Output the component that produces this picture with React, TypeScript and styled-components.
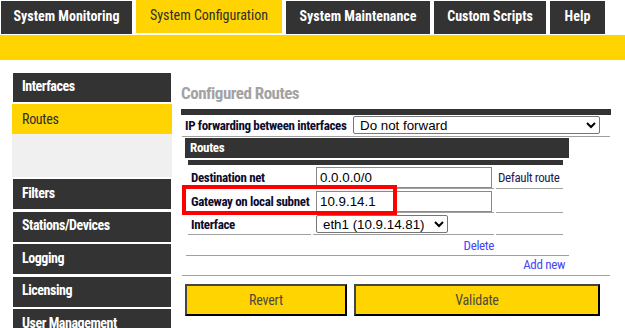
import React from 'react';
import styled, { createGlobalStyle } from 'styled-components';

const COND = '"Roboto Condensed", "Liberation Sans Narrow", "Arial Narrow", Roboto, sans-serif';
const ARIAL = '"Liberation Sans", Arial, sans-serif';
const DARK = '#333333';
const YELLOW = '#ffd400';
const RULE = '#a0a0a0';

const GlobalStyle = createGlobalStyle`
  html, body {
    margin: 0;
    padding: 0;
    background: #fff;
  }
  body {
    font-family: ${COND};
    overflow: hidden;
  }
`;

const TabBar = styled.nav`
  display: flex;
  align-items: flex-start;
  gap: 4px;
  height: 34px;
  padding-left: 1px;
`;

const Tab = styled.div<{ $w: number; $active?: boolean }>`
  box-sizing: border-box;
  width: ${(p) => p.$w}px;
  height: 33px;
  margin-top: ${(p) => (p.$active ? 0 : 1)}px;
  padding-bottom: ${(p) => (p.$active ? 3 : 4)}px;
  display: flex;
  align-items: center;
  justify-content: center;
  background: ${(p) => (p.$active ? YELLOW : DARK)};
  color: ${(p) => (p.$active ? '#2e2e2e' : '#fff')};
  font-size: 14px;
  font-weight: ${(p) => (p.$active ? 400 : 700)};
  white-space: nowrap;
`;

const Band = styled.div`
  height: 25px;
  margin-top: 1px;
  background: ${YELLOW};
`;

const Main = styled.div`
  display: flex;
  align-items: flex-start;
  padding: 13px 0 0 12px;
`;

const Sidebar = styled.aside`
  width: 160px;
  display: flex;
  flex-direction: column;
  gap: 2.5px;
`;

const SideItem = styled.div<{ $h?: number }>`
  box-sizing: border-box;
  height: ${(p) => p.$h ?? 30}px;
  margin: 0 1px;
  padding: 0 0 3px 9px;
  display: flex;
  align-items: center;
  background: ${DARK};
  color: #fff;
  font-size: 14px;
  font-weight: 700;
  letter-spacing: -0.45px;
  white-space: nowrap;
`;

const ActiveGroup = styled.div`
  display: flex;
  flex-direction: column;
`;

const ActiveItem = styled.div`
  box-sizing: border-box;
  height: 30px;
  padding: 0 0 1px 10px;
  display: flex;
  align-items: center;
  background: ${YELLOW};
  color: #2e2e2e;
  font-size: 14px;
  letter-spacing: -0.3px;
`;

const SubMenu = styled.div`
  height: 42.5px;
  background: #f0f0f0;
`;

const Content = styled.section`
  position: relative;
  width: 430px;
  margin-left: 9px;
`;

const Title = styled.h2`
  margin: 0 0 6px;
  padding-top: 10px;
  height: 20px;
  line-height: 20px;
  font-size: 17px;
  font-weight: 700;
  letter-spacing: -0.5px;
  color: #a3a3a3;
`;

const TopBar = styled.div`
  height: 6px;
  background: ${DARK};
`;

const FieldRow = styled.div`
  display: flex;
  align-items: center;
  margin: 0 1px;
  padding: 1px 0 2px;
  border-bottom: 1px solid ${RULE};
`;

const Label = styled.span`
  box-sizing: border-box;
  width: 171px;
  padding-left: 3px;
  font-size: 13px;
  font-weight: 700;
  letter-spacing: -0.35px;
  color: #0b0b2e;
  white-space: nowrap;
`;

const Select = styled.select<{ $w: number }>`
  box-sizing: border-box;
  width: ${(p) => p.$w}px;
  height: 18px;
  margin: 0;
  padding: 0 2px;
  border: 1px solid #767676;
  border-radius: 2px;
  background: #fff;
  color: #000;
  font-family: ${ARIAL};
  font-size: 13.33px;
`;

const Input = styled.input`
  box-sizing: border-box;
  width: 176px;
  height: 21px;
  margin: 0;
  padding: 1px 3px;
  border: 1px solid #8a8a8a;
  border-radius: 0;
  color: #000;
  font-family: ${ARIAL};
  font-size: 13.33px;
`;

const Section = styled.div`
  margin: 0 1px;
  padding: 1px 0 0 3px;
  border-bottom: 1px solid ${RULE};
`;

const RoutesBox = styled.div`
  width: 384px;
`;

const RoutesHeader = styled.div`
  box-sizing: border-box;
  height: 20px;
  padding: 0 0 2px 5px;
  display: flex;
  align-items: center;
  background: ${DARK};
  color: #fff;
  font-size: 13px;
  font-weight: 700;
  letter-spacing: -0.3px;
`;

const RouteTable = styled.table`
  margin-left: 1px;
  border-collapse: separate;
  border-spacing: 2px;
`;

const BarCell = styled.td`
  height: 5px;
  padding: 0;
  background: ${DARK};
`;

const Cell = styled.td<{ $w: number; $pl?: number }>`
  box-sizing: border-box;
  width: ${(p) => p.$w}px;
  padding: 0 0 0 ${(p) => p.$pl ?? 3}px;
  border-bottom: 1px solid ${RULE};
  vertical-align: middle;
  line-height: 0;
`;

const CellLabel = styled.span`
  font-size: 13px;
  line-height: 15px;
  font-weight: 700;
  letter-spacing: -0.35px;
  color: #0b0b2e;
  white-space: nowrap;
`;

const Note = styled.span`
  font-size: 13px;
  line-height: 15px;
  letter-spacing: -0.4px;
  color: #1d1d55;
  white-space: nowrap;
`;

const LinkRow = styled.div<{ $h: number; $pr: number; $rule?: boolean }>`
  box-sizing: border-box;
  height: ${(p) => p.$h}px;
  margin-left: 1px;
  padding: 0 ${(p) => p.$pr}px 2px 0;
  display: flex;
  align-items: center;
  justify-content: flex-end;
  border-bottom: ${(p) => (p.$rule ? `1px solid ${RULE}` : 'none')};
`;

const Link = styled.a`
  font-size: 13px;
  letter-spacing: -0.35px;
  color: #4747f5;
  text-decoration: none;
  cursor: pointer;
`;

const ButtonRow = styled.div`
  display: flex;
  gap: 7px;
  margin-top: 8px;
  padding-left: 4px;
`;

const Button = styled.button<{ $w: number }>`
  box-sizing: border-box;
  width: ${(p) => p.$w}px;
  height: 32px;
  margin: 0;
  padding: 0;
  background: ${YELLOW};
  border: 2px solid;
  border-color: #454545 #000 #000 #454545;
  color: #4e4a3e;
  font-family: ${COND};
  font-size: 14px;
  letter-spacing: -0.2px;
`;

const Highlight = styled.div`
  position: absolute;
  left: 1px;
  top: 112px;
  width: 215px;
  height: 30px;
  box-sizing: border-box;
  border: 4px solid #ff0000;
  pointer-events: none;
`;

const tabs = [
  { label: 'System Monitoring', w: 131 },
  { label: 'System Configuration', w: 146, active: true },
  { label: 'System Maintenance', w: 144 },
  { label: 'Custom Scripts', w: 112 },
  { label: 'Help', w: 55 },
];

const menu = ['Filters', 'Stations/Devices', 'Logging', 'Licensing', 'User Management'];

export default function App() {
  return (
    <>
      <GlobalStyle />
      <TabBar>
        {tabs.map((t) => (
          <Tab key={t.label} $w={t.w} $active={t.active}>
            {t.label}
          </Tab>
        ))}
      </TabBar>
      <Band />
      <Main>
        <Sidebar>
          <SideItem $h={28.5}>Interfaces</SideItem>
          <ActiveGroup>
            <ActiveItem>Routes</ActiveItem>
            <SubMenu />
          </ActiveGroup>
          {menu.map((m) => (
            <SideItem key={m}>{m}</SideItem>
          ))}
        </Sidebar>
        <Content>
          <Title>Configured Routes</Title>
          <TopBar />
          <FieldRow>
            <Label>IP forwarding between interfaces</Label>
            <Select $w={247} defaultValue="no">
              <option value="no">Do not forward</option>
              <option value="yes">Forward</option>
            </Select>
          </FieldRow>
          <Section>
            <RoutesBox>
              <RoutesHeader>Routes</RoutesHeader>
              <RouteTable>
                <tbody>
                  <tr>
                    <BarCell colSpan={3} />
                  </tr>
                  <tr>
                    <Cell $w={123}>
                      <CellLabel>Destination net</CellLabel>
                    </Cell>
                    <Cell $w={181}>
                      <Input defaultValue="0.0.0.0/0" />
                    </Cell>
                    <Cell $w={67} $pl={2}>
                      <Note>Default route</Note>
                    </Cell>
                  </tr>
                  <tr>
                    <Cell $w={123}>
                      <CellLabel>Gateway on local subnet</CellLabel>
                    </Cell>
                    <Cell $w={181}>
                      <Input defaultValue="10.9.14.1" />
                    </Cell>
                    <Cell $w={67} $pl={2} />
                  </tr>
                  <tr>
                    <Cell $w={123}>
                      <CellLabel>Interface</CellLabel>
                    </Cell>
                    <Cell $w={181} style={{ paddingBottom: 1 }}>
                      <Select $w={132} defaultValue="eth1">
                        <option value="eth1">eth1 (10.9.14.81)</option>
                      </Select>
                    </Cell>
                    <Cell $w={67} $pl={2} />
                  </tr>
                </tbody>
              </RouteTable>
              <LinkRow $h={19} $pr={75} $rule>
                <Link>Delete</Link>
              </LinkRow>
              <LinkRow $h={19} $pr={4}>
                <Link>Add new</Link>
              </LinkRow>
            </RoutesBox>
          </Section>
          <ButtonRow>
            <Button $w={162}>Revert</Button>
            <Button $w={246}>Validate</Button>
          </ButtonRow>
          <Highlight />
        </Content>
      </Main>
    </>
  );
}
